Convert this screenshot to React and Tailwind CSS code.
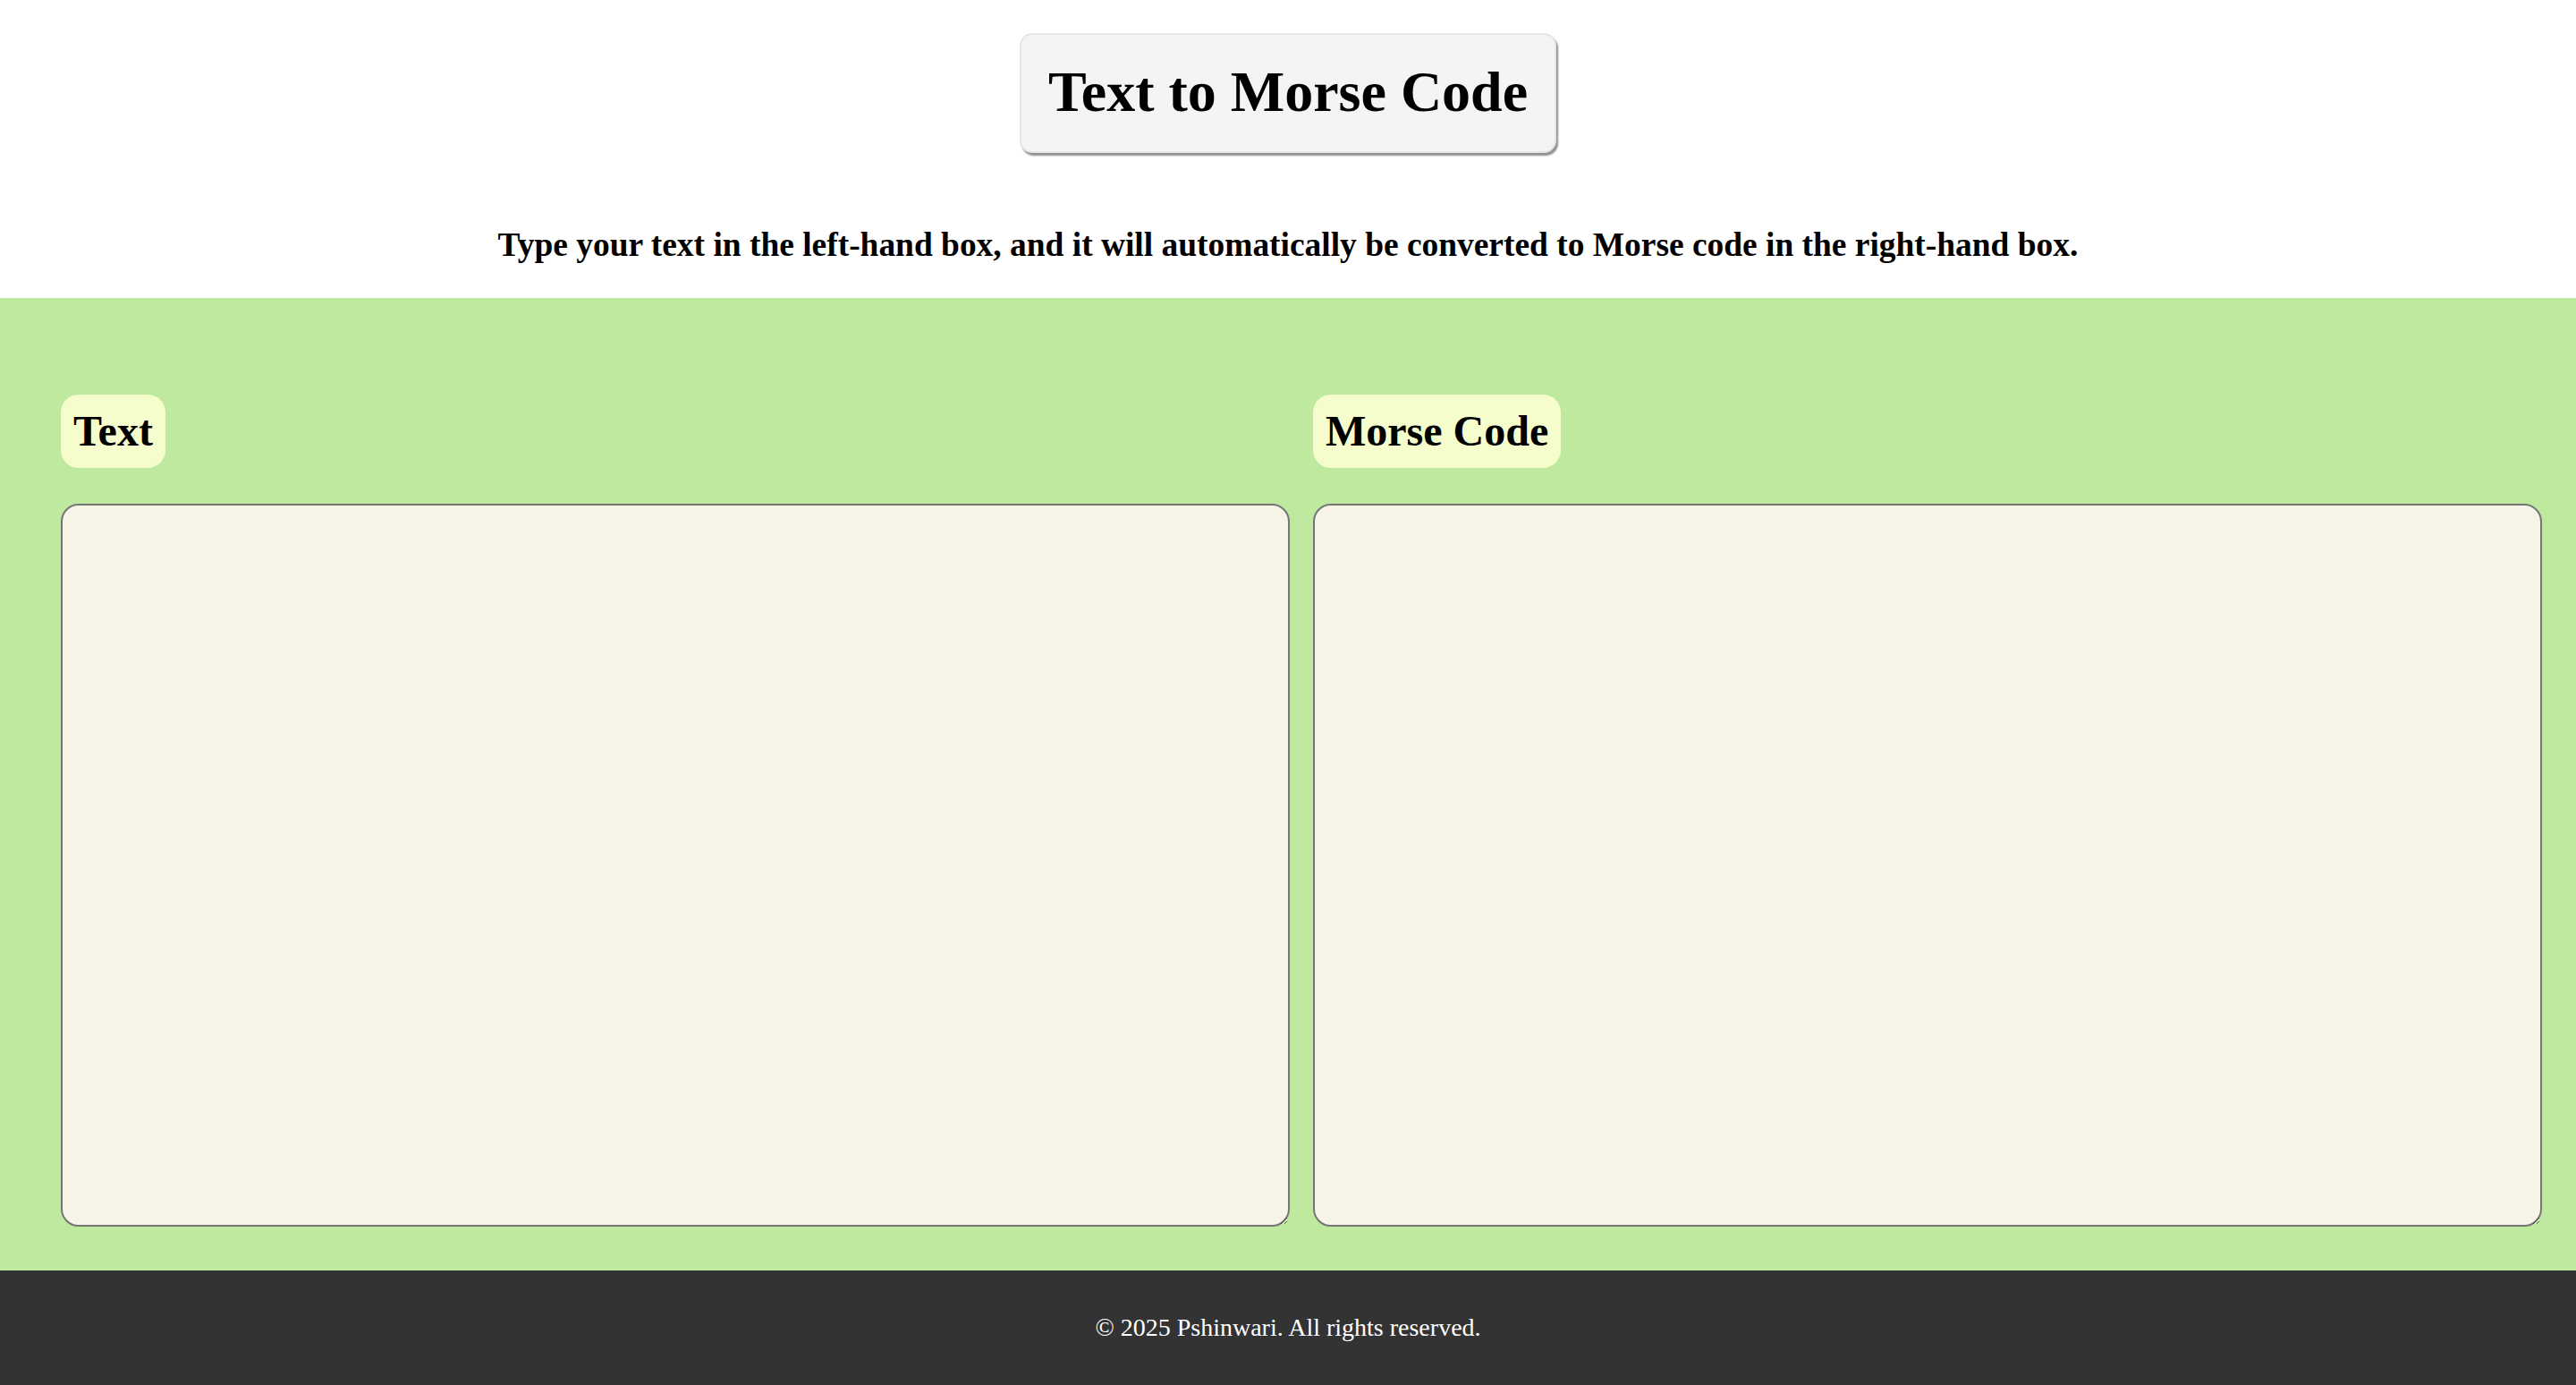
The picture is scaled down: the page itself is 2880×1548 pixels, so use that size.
import React, { useState } from 'react';

const MORSE = {
  a: '.-', b: '-...', c: '-.-.', d: '-..', e: '.', f: '..-.', g: '--.', h: '....', i: '..', j: '.---',
  k: '-.-', l: '.-..', m: '--', n: '-.', o: '---', p: '.--.', q: '--.-', r: '.-.', s: '...', t: '-',
  u: '..-', v: '...-', w: '.--', x: '-..-', y: '-.--', z: '--..',
  0: '-----', 1: '.----', 2: '..---', 3: '...--', 4: '....-', 5: '.....', 6: '-....', 7: '--...', 8: '---..', 9: '----.',
};

function toMorse(text) {
  return text
    .toLowerCase()
    .split('')
    .map((ch) => (ch === ' ' ? '/' : MORSE[ch] || ''))
    .filter(Boolean)
    .join(' ');
}

export default function App() {
  const [text, setText] = useState('');

  return (
    <div className="min-h-screen flex flex-col font-['Liberation_Serif','Times_New_Roman',serif] text-black">
      {/* header */}
      <header className="bg-white flex flex-col items-center pt-[37px]">
        <h1 className="bg-[#f4f4f4] border-2 border-[#e6e6e6] rounded-[14px] shadow-[2px_3px_2px_#8f8f8f] px-[30px] pt-[27px] pb-[29px] text-[64px] leading-[74px] font-bold">
          Text to Morse Code
        </h1>
        <p className="mt-[81px] mb-[38px] text-[37.44px] leading-[43px] font-bold text-center">
          Type your text in the left-hand box, and it will automatically be converted to Morse code in the right-hand box.
        </p>
      </header>

      {/* converter */}
      <main className="bg-[#bee99e] flex gap-[26px] pl-[68px] pr-[38px] pt-[108px] pb-[49px]">
        <section className="flex-1 flex flex-col items-start">
          <h2 className="bg-[#f5fdcd] rounded-[20px] px-[14px] py-[13px] text-[48px] leading-[56px] font-bold">Text</h2>
          <textarea
            value={text}
            onChange={(e) => setText(e.target.value)}
            className="block resize mt-[40px] w-full h-[808px] bg-[#f7f5e8] border-2 border-[#767676] rounded-[20px] p-[4px] text-[26px] outline-none"
          />
        </section>
        <section className="flex-1 flex flex-col items-start">
          <h2 className="bg-[#f5fdcd] rounded-[20px] px-[14px] py-[13px] text-[48px] leading-[56px] font-bold">Morse Code</h2>
          <textarea
            value={toMorse(text)}
            readOnly
            className="block resize mt-[40px] w-full h-[808px] bg-[#f7f5e8] border-2 border-[#767676] rounded-[20px] p-[4px] text-[26px] outline-none"
          />
        </section>
      </main>

      {/* footer */}
      <footer className="bg-[#333333] text-white text-center text-[28px] leading-[32px] py-[48px]">
        © 2025 Pshinwari. All rights reserved.
      </footer>
    </div>
  );
}
